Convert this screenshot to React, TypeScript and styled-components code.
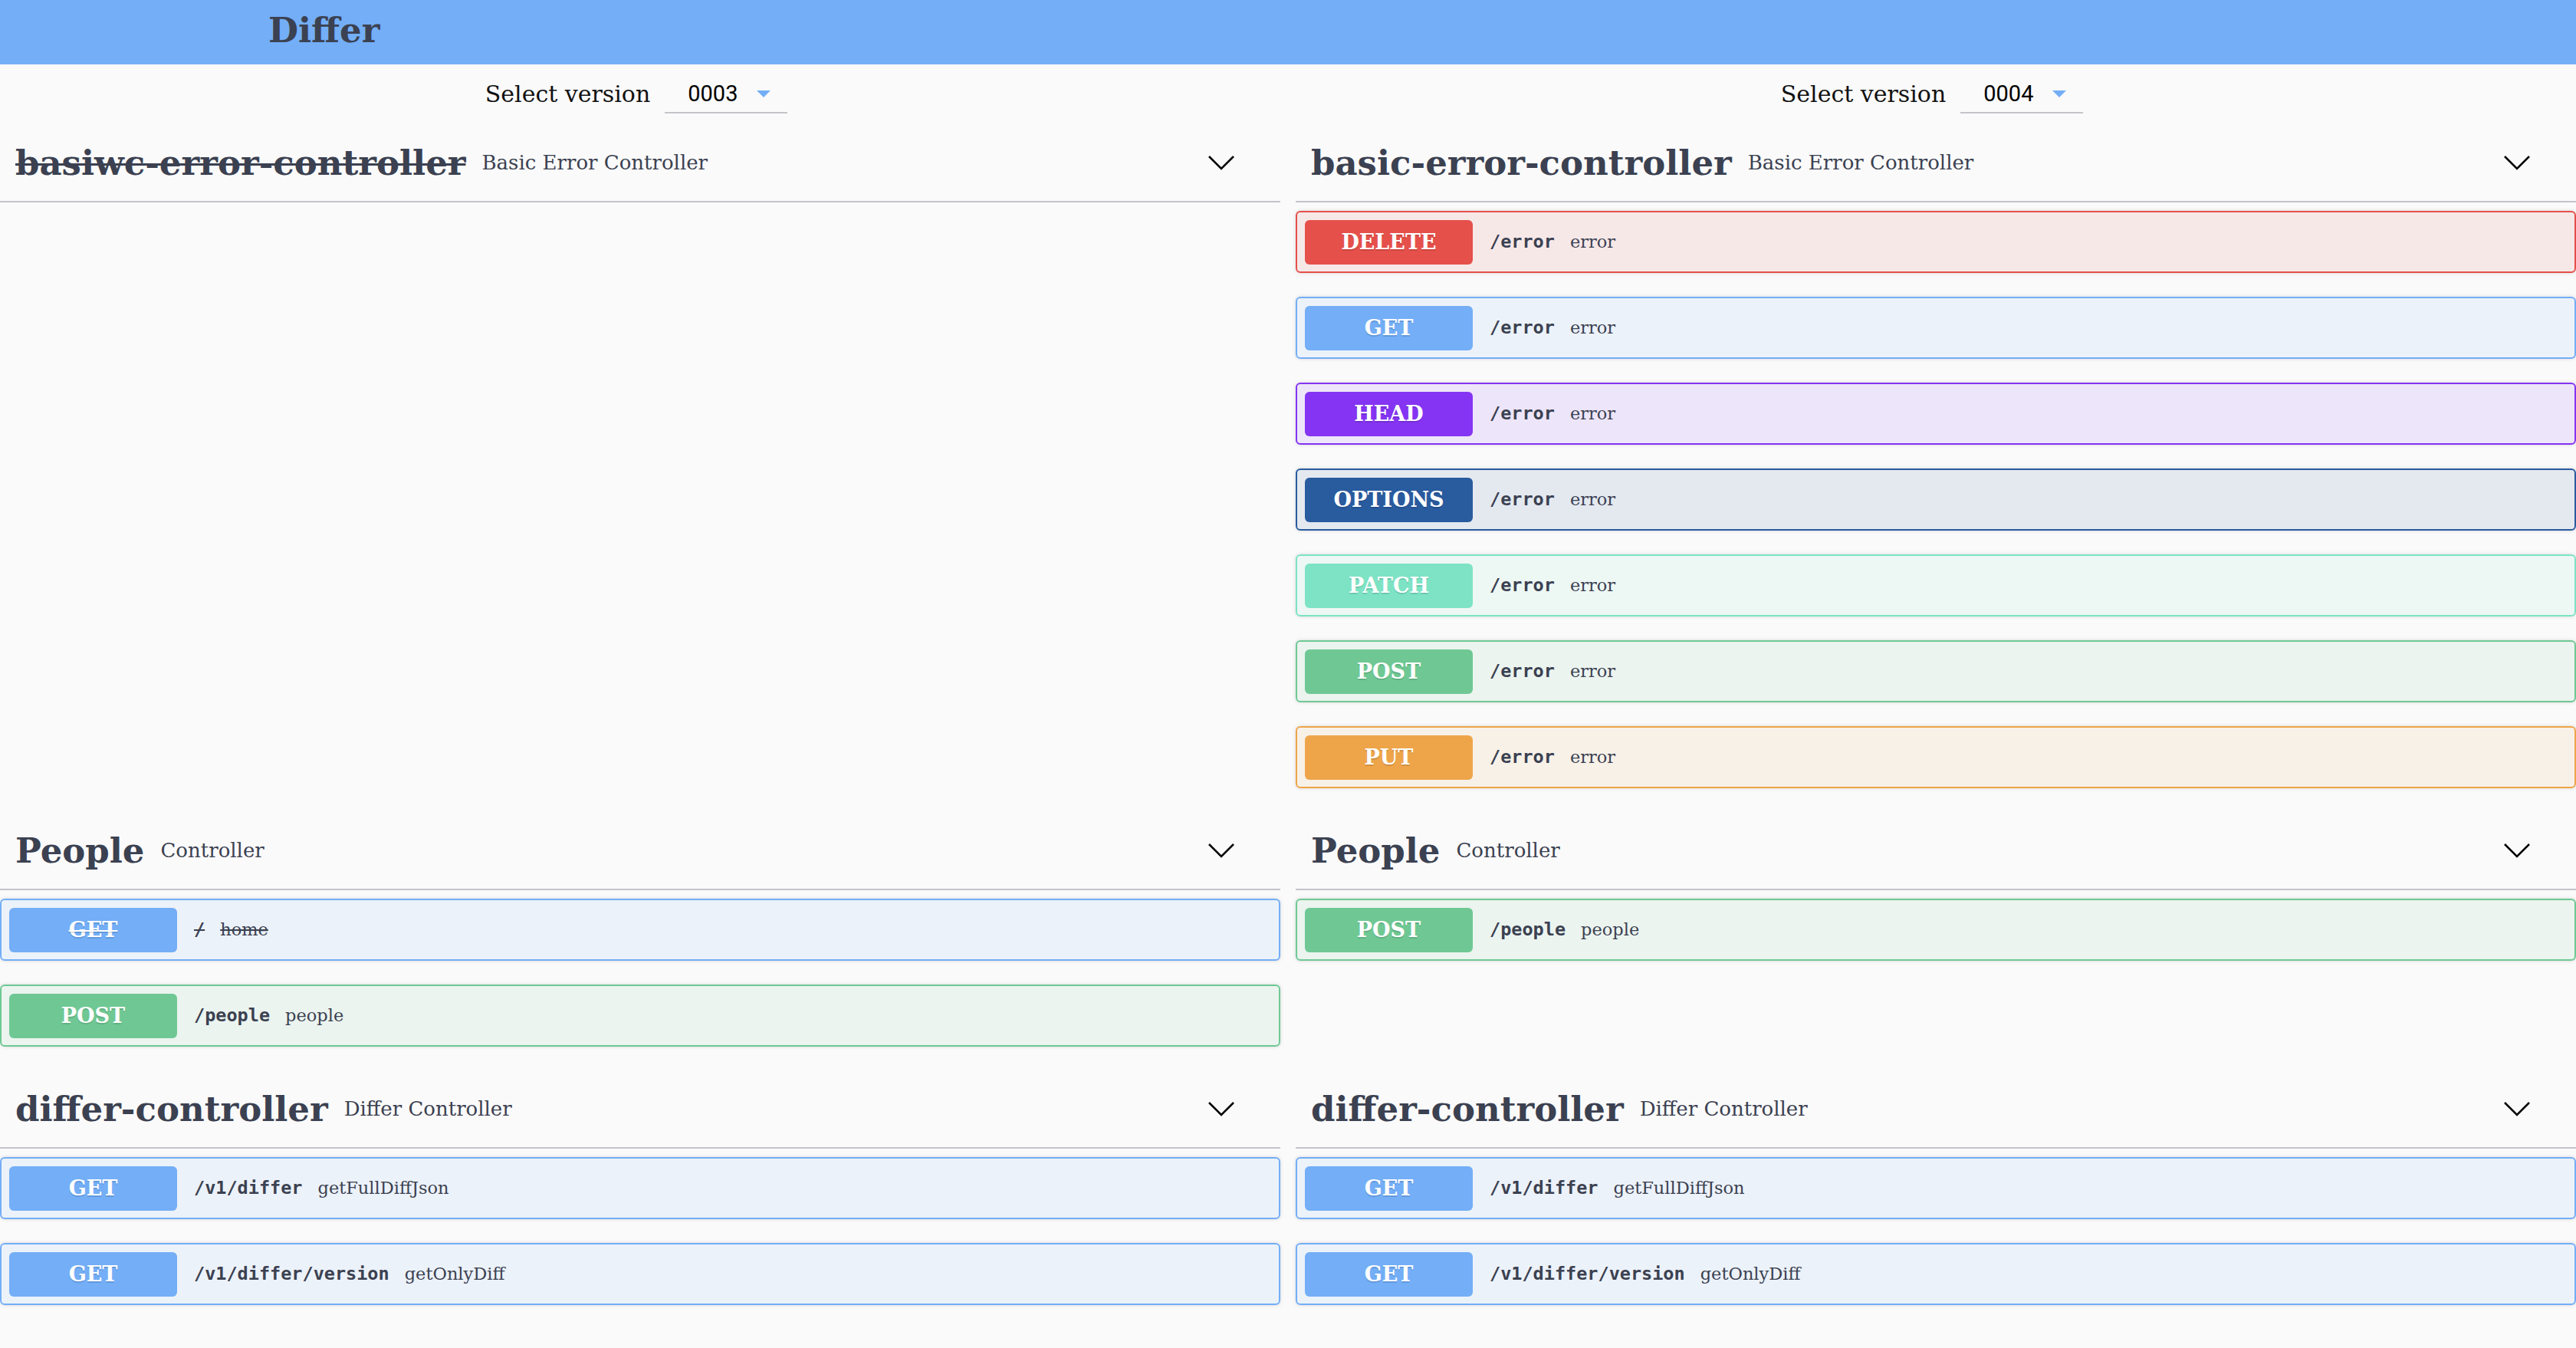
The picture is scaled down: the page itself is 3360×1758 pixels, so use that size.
import React from "react";
import styled, { createGlobalStyle, css } from "styled-components";

const SERIF = `"DejaVu Serif", "Liberation Serif", serif`;
const MONO = `"DejaVu Sans Mono", "Liberation Mono", monospace`;
const INK = "#3b4151";

type Method = "DELETE" | "GET" | "HEAD" | "OPTIONS" | "PATCH" | "POST" | "PUT";

const methodColor: Record<Method, string> = {
  DELETE: "#e5504b",
  GET: "#73aef7",
  HEAD: "#8434f2",
  OPTIONS: "#295b9f",
  PATCH: "#7de3c4",
  POST: "#6fc894",
  PUT: "#eea54a",
};

const tint = (hex: string, a: number) => {
  const n = parseInt(hex.slice(1), 16);
  return `rgba(${(n >> 16) & 255}, ${(n >> 8) & 255}, ${n & 255}, ${a})`;
};

type Op = { method: Method; path: string; summary: string; deprecated?: boolean };
type Tag = { name: string; description: string; deprecated?: boolean; ops: Op[] };
type Section = { left: Tag; right: Tag };

const sections: Section[] = [
  {
    left: { name: "basiwc-error-controller", description: "Basic Error Controller", deprecated: true, ops: [] },
    right: {
      name: "basic-error-controller",
      description: "Basic Error Controller",
      ops: (["DELETE", "GET", "HEAD", "OPTIONS", "PATCH", "POST", "PUT"] as Method[]).map((m) => ({
        method: m,
        path: "/error",
        summary: "error",
      })),
    },
  },
  {
    left: {
      name: "People",
      description: "Controller",
      ops: [
        { method: "GET", path: "/", summary: "home", deprecated: true },
        { method: "POST", path: "/people", summary: "people" },
      ],
    },
    right: {
      name: "People",
      description: "Controller",
      ops: [{ method: "POST", path: "/people", summary: "people" }],
    },
  },
  {
    left: {
      name: "differ-controller",
      description: "Differ Controller",
      ops: [
        { method: "GET", path: "/v1/differ", summary: "getFullDiffJson" },
        { method: "GET", path: "/v1/differ/version", summary: "getOnlyDiff" },
      ],
    },
    right: {
      name: "differ-controller",
      description: "Differ Controller",
      ops: [
        { method: "GET", path: "/v1/differ", summary: "getFullDiffJson" },
        { method: "GET", path: "/v1/differ/version", summary: "getOnlyDiff" },
      ],
    },
  },
];

const GlobalStyle = createGlobalStyle`
  html, body {
    margin: 0;
    padding: 0;
    background: #fafafa;
  }
  body {
    font-family: ${SERIF};
    color: ${INK};
  }
  *, *::before, *::after {
    box-sizing: border-box;
  }
`;

const TopBar = styled.header`
  height: 84px;
  background: #73aef7;
  display: flex;
  align-items: center;
  padding: 0 0 5px 350px;
`;

const Brand = styled.h1`
  margin: 0;
  font: bold 45px/1 ${SERIF};
  color: ${INK};
`;

const Columns = styled.div`
  display: grid;
  grid-template-columns: 1fr 1fr;
  column-gap: 20px;
`;

const VersionBar = styled.div`
  height: 78px;
  display: flex;
  align-items: center;
  justify-content: center;
  gap: 19px;
`;

const VersionLabel = styled.span`
  font: 30px/1 ${SERIF};
  color: #111;
`;

const VersionSelect = styled.div`
  width: 160px;
  height: 50px;
  margin-right: 10px;
  border-bottom: 2px solid #c4c4c8;
  display: flex;
  align-items: center;
  gap: 25px;
  padding-left: 30px;
  font: 29px/1 Roboto, "Liberation Sans", sans-serif;
  color: #000;
`;

const TagBlock = styled.section`
  display: flex;
  flex-direction: column;
  min-width: 0;
`;

const TagHeader = styled.div`
  height: 102px;
  border-bottom: 2px solid #c4c4c9;
  display: flex;
  align-items: center;
  padding: 0 59px 0 20px;
`;

const TagName = styled.h3<{ $deprecated?: boolean }>`
  margin: 0;
  font: bold 45px/1 ${SERIF};
  color: ${INK};
  white-space: nowrap;
  ${(p) =>
    p.$deprecated &&
    css`
      text-decoration: line-through;
      text-decoration-thickness: 3px;
    `}
`;

const TagDesc = styled.span`
  margin-left: 21px;
  font: 26px/1 ${SERIF};
  color: ${INK};
  white-space: nowrap;
`;

const Chevron = styled.svg`
  margin-left: auto;
  flex: none;
`;

const OpList = styled.div`
  padding-top: 11px;
`;

const OpRow = styled.div<{ $color: string }>`
  height: 81px;
  margin-bottom: 31px;
  border: 2px solid ${(p) => p.$color};
  border-radius: 6px;
  background: ${(p) => tint(p.$color, 0.1)};
  box-shadow: 0 0 5px rgba(0, 0, 0, 0.14);
  display: flex;
  align-items: center;
  padding-left: 10px;
`;

const strike = css`
  text-decoration: line-through;
  text-decoration-thickness: 2px;
`;

const Badge = styled.span<{ $color: string; $deprecated?: boolean }>`
  flex: none;
  width: 219px;
  height: 58px;
  border-radius: 6px;
  background: ${(p) => p.$color};
  color: #fff;
  font: bold 27px/1 ${SERIF};
  display: flex;
  align-items: center;
  justify-content: center;
  text-shadow: 0 2px 0 rgba(0, 0, 0, 0.12);
  ${(p) => p.$deprecated && strike}
`;

const OpPath = styled.span<{ $deprecated?: boolean }>`
  margin-left: 22px;
  font: bold 23.5px/1 ${MONO};
  color: ${INK};
  ${(p) => p.$deprecated && strike}
`;

const OpSummary = styled.span<{ $deprecated?: boolean }>`
  margin-left: 20px;
  font: 22.5px/1 ${SERIF};
  color: ${INK};
  ${(p) => p.$deprecated && strike}
`;

const Caret = () => (
  <svg width="18" height="9" viewBox="0 0 18 9">
    <polygon points="0,0 18,0 9,9" fill="#73aef7" />
  </svg>
);

const VersionPicker = ({ value }: { value: string }) => (
  <VersionBar>
    <VersionLabel>Select version</VersionLabel>
    <VersionSelect>
      <span>{value}</span>
      <Caret />
    </VersionSelect>
  </VersionBar>
);

const Operation = ({ op }: { op: Op }) => {
  const c = methodColor[op.method];
  return (
    <OpRow $color={c}>
      <Badge $color={c} $deprecated={op.deprecated}>
        {op.method}
      </Badge>
      <OpPath $deprecated={op.deprecated}>{op.path}</OpPath>
      <OpSummary $deprecated={op.deprecated}>{op.summary}</OpSummary>
    </OpRow>
  );
};

const TagSection = ({ tag }: { tag: Tag }) => (
  <TagBlock>
    <TagHeader>
      <TagName $deprecated={tag.deprecated}>{tag.name}</TagName>
      <TagDesc>{tag.description}</TagDesc>
      <Chevron width="36" height="20" viewBox="0 0 36 20">
        <polyline points="2,2 18,18 34,2" fill="none" stroke="#000" strokeWidth="2.5" />
      </Chevron>
    </TagHeader>
    <OpList>
      {tag.ops.map((op, i) => (
        <Operation key={i} op={op} />
      ))}
    </OpList>
  </TagBlock>
);

export default function App() {
  return (
    <>
      <GlobalStyle />
      <TopBar>
        <Brand>Differ</Brand>
      </TopBar>
      <Columns>
        <VersionPicker value="0003" />
        <VersionPicker value="0004" />
      </Columns>
      {sections.map((s, i) => (
        <Columns key={i}>
          <TagSection tag={s.left} />
          <TagSection tag={s.right} />
        </Columns>
      ))}
    </>
  );
}
